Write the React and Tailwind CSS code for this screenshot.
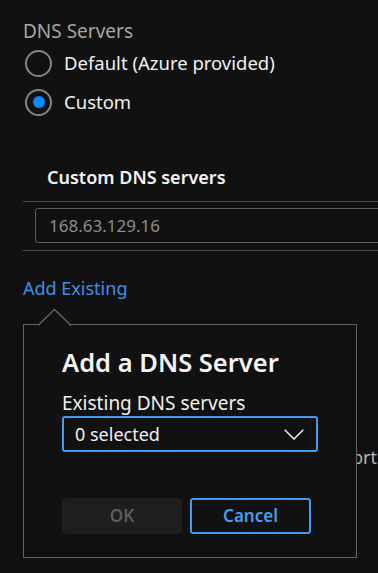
import { useState } from 'react';

const Radio = ({ checked, label, onClick }) => (
  <button onClick={onClick} className="flex items-center gap-[12px] h-[28px] text-left">
    <span className="w-[27px] h-[27px] rounded-full border-2 border-[#858585] flex items-center justify-center shrink-0">
      {checked && <span className="w-[12px] h-[12px] rounded-full bg-[#0a8aff]" />}
    </span>
    <span className="text-[18.5px] text-[#f0f0f0] leading-[28px]">{label}</span>
  </button>
);

const App = () => {
  const [dns, setDns] = useState('custom');

  return (
    <div className="relative w-[378px] h-[573px] overflow-hidden bg-[#111111] font-['Noto_Sans',sans-serif]">
      <div className="flex flex-col pt-[19px]">
        <div className="pl-[23px] text-[19px] leading-[24px] text-[#a6a6a6]">DNS Servers</div>
        <div className="flex flex-col gap-[11px] pl-[25px] mt-[6px]">
          <Radio checked={dns === 'default'} label="Default (Azure provided)" onClick={() => setDns('default')} />
          <Radio checked={dns === 'custom'} label="Custom" onClick={() => setDns('custom')} />
        </div>

        <div className="mt-[49px] pl-[47px] text-[18px] leading-[24px] font-semibold text-[#f4f4f4]">Custom DNS servers</div>
        <div className="ml-[23px] mt-[12px] border-t border-[#4d4d4d]" />
        <div className="ml-[35px] mt-[6px] h-[35px] border border-[#5c5c5c] rounded-[3px] -mr-[4px] flex items-center pl-[13px]">
          <span className="text-[17px] text-[#8c8c8c]">168.63.129.16</span>
        </div>
        <div className="ml-[23px] mt-[7px] border-t border-[#4d4d4d]" />

        <button className="self-start ml-[23px] mt-[25px] text-[18px] leading-[24px] text-[#3f8fe8]">Add Existing</button>

        <div className="flex justify-end mt-[145px] pr-[1px]">
          <span className="text-[18px] leading-[24px] text-[#b5b5b5]">Support</span>
        </div>
      </div>

      <div className="absolute left-[23px] top-[324px] w-[334px] h-[234px] border-[1.5px] border-[#626262] bg-[#111111] flex flex-col pl-[38px]">
        <svg className="absolute left-[14px] -top-[16px]" width="33" height="17" viewBox="0 0 33 17">
          <polyline points="0,16.5 16.5,0.5 33,16.5" fill="#111111" stroke="#626262" strokeWidth="1.5" />
        </svg>
        <div className="mt-[21px] text-[25.5px] leading-[32px] font-semibold text-[#f4f4f4]">Add a DNS Server</div>
        <div className="mt-[13px] text-[19px] leading-[24px] text-[#f0f0f0]">Existing DNS servers</div>
        <button className="mt-[1px] w-[256px] h-[36px] border-2 border-[#3f9cf0] rounded-[3px] flex items-center justify-between pl-[11px] pr-[12px]">
          <span className="text-[18px] text-[#f0f0f0]">0 selected</span>
          <svg width="20" height="11" viewBox="0 0 20 11">
            <polyline points="0.7,0.7 10,10 19.3,0.7" fill="none" stroke="#f0f0f0" strokeWidth="1.5" />
          </svg>
        </button>
        <div className="flex gap-[8px] mt-[46px]">
          <button disabled className="w-[120px] h-[36px] rounded-[3px] bg-[#1e1e1e] text-[17px] font-semibold text-[#5c5c5c]">OK</button>
          <button className="w-[121px] h-[36px] rounded-[3px] border-2 border-[#3f9cf0] text-[17px] font-semibold text-[#4a9cf0]">Cancel</button>
        </div>
      </div>
    </div>
  );
};

export default App;
